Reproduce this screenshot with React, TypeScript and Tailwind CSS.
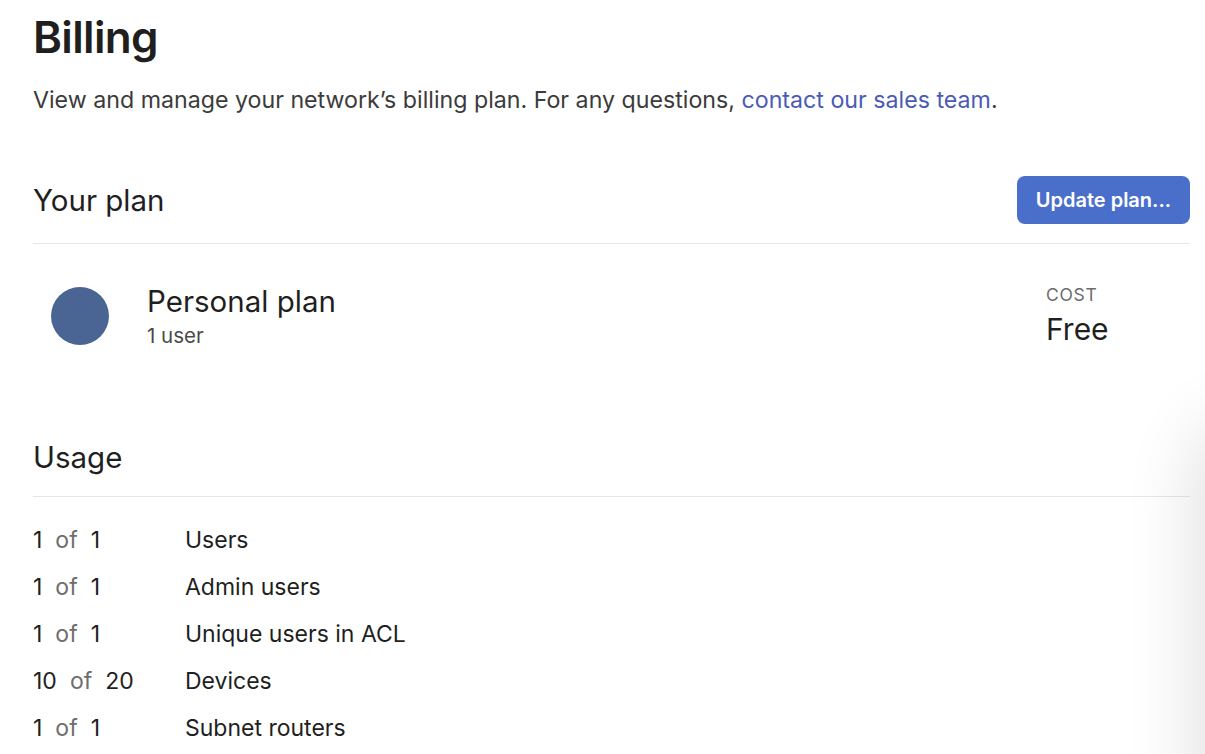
import React from 'react';

const usage = [
    { used: 1, limit: 1, label: 'Users' },
    { used: 1, limit: 1, label: 'Admin users' },
    { used: 1, limit: 1, label: 'Unique users in ACL' },
    { used: 10, limit: 20, label: 'Devices' },
    { used: 1, limit: 1, label: 'Subnet routers' },
];

const App: React.FC = () => {
    return (
        <div className="relative min-h-[754px] overflow-hidden bg-white font-['Inter',sans-serif] text-[#1f1f1f]">
            <div className="pl-[33px] pr-[15px]">
                {/* Page header */}
                <h1 className="pt-[10px] text-[44px] leading-[54px] font-semibold tracking-[-0.015em]">Billing</h1>
                <p className="mt-[20px] text-[23.2px] leading-[32px] text-[#3b3b3b]">
                    View and manage your network’s billing plan. For any questions,{' '}
                    <a href="#" className="text-[#4a5bb4]">contact our sales team</a>.
                </p>

                {/* Your plan */}
                <div className="mt-[60px] flex items-center justify-between border-b border-[#e7e7e7] pb-[19px]">
                    <h2 className="text-[29.5px] leading-[40px]">Your plan</h2>
                    <button className="h-[48px] w-[173px] rounded-[8px] bg-[#4a6fcb] text-[20px] font-semibold text-white">
                        Update plan...
                    </button>
                </div>

                <div className="flex items-start justify-between pt-[38px]">
                    <div className="flex items-start">
                        <div className="ml-[18px] mt-[5px] h-[58px] w-[58px] rounded-full bg-[#4a6494]" />
                        <div className="ml-[38px]">
                            <div className="text-[29.5px] leading-[38px]">Personal plan</div>
                            <div className="text-[20.5px] leading-[32px] text-[#4a4a4a]">1 user</div>
                        </div>
                    </div>
                    <div className="mr-[84px] mt-[3px] w-[60px]">
                        <div className="text-[17.5px] leading-[20px] uppercase tracking-[0.04em] text-[#6b6b6b]">Cost</div>
                        <div className="mt-[7px] text-[30px] leading-[34px]">Free</div>
                    </div>
                </div>

                {/* Usage */}
                <h2 className="mt-[85px] border-b border-[#e7e7e7] pb-[19px] text-[29.5px] leading-[40px]">Usage</h2>
                <div className="pt-[20px]">
                    {usage.map((row) => (
                        <div key={row.label} className="flex h-[47px] items-center text-[23px]">
                            <div className="w-[152px] shrink-0">
                                {row.used}
                                <span className="mx-[13px] text-[#6e6e6e]">of</span>
                                {row.limit}
                            </div>
                            <div>{row.label}</div>
                        </div>
                    ))}
                </div>
            </div>

            {/* Shadow cast by an off-screen panel */}
            <div className="pointer-events-none absolute right-[-60px] top-[430px] h-[600px] w-[60px] rounded-l-[40px] shadow-[0_0_70px_10px_rgba(0,0,0,0.12)]" />
        </div>
    );
};

export default App;
